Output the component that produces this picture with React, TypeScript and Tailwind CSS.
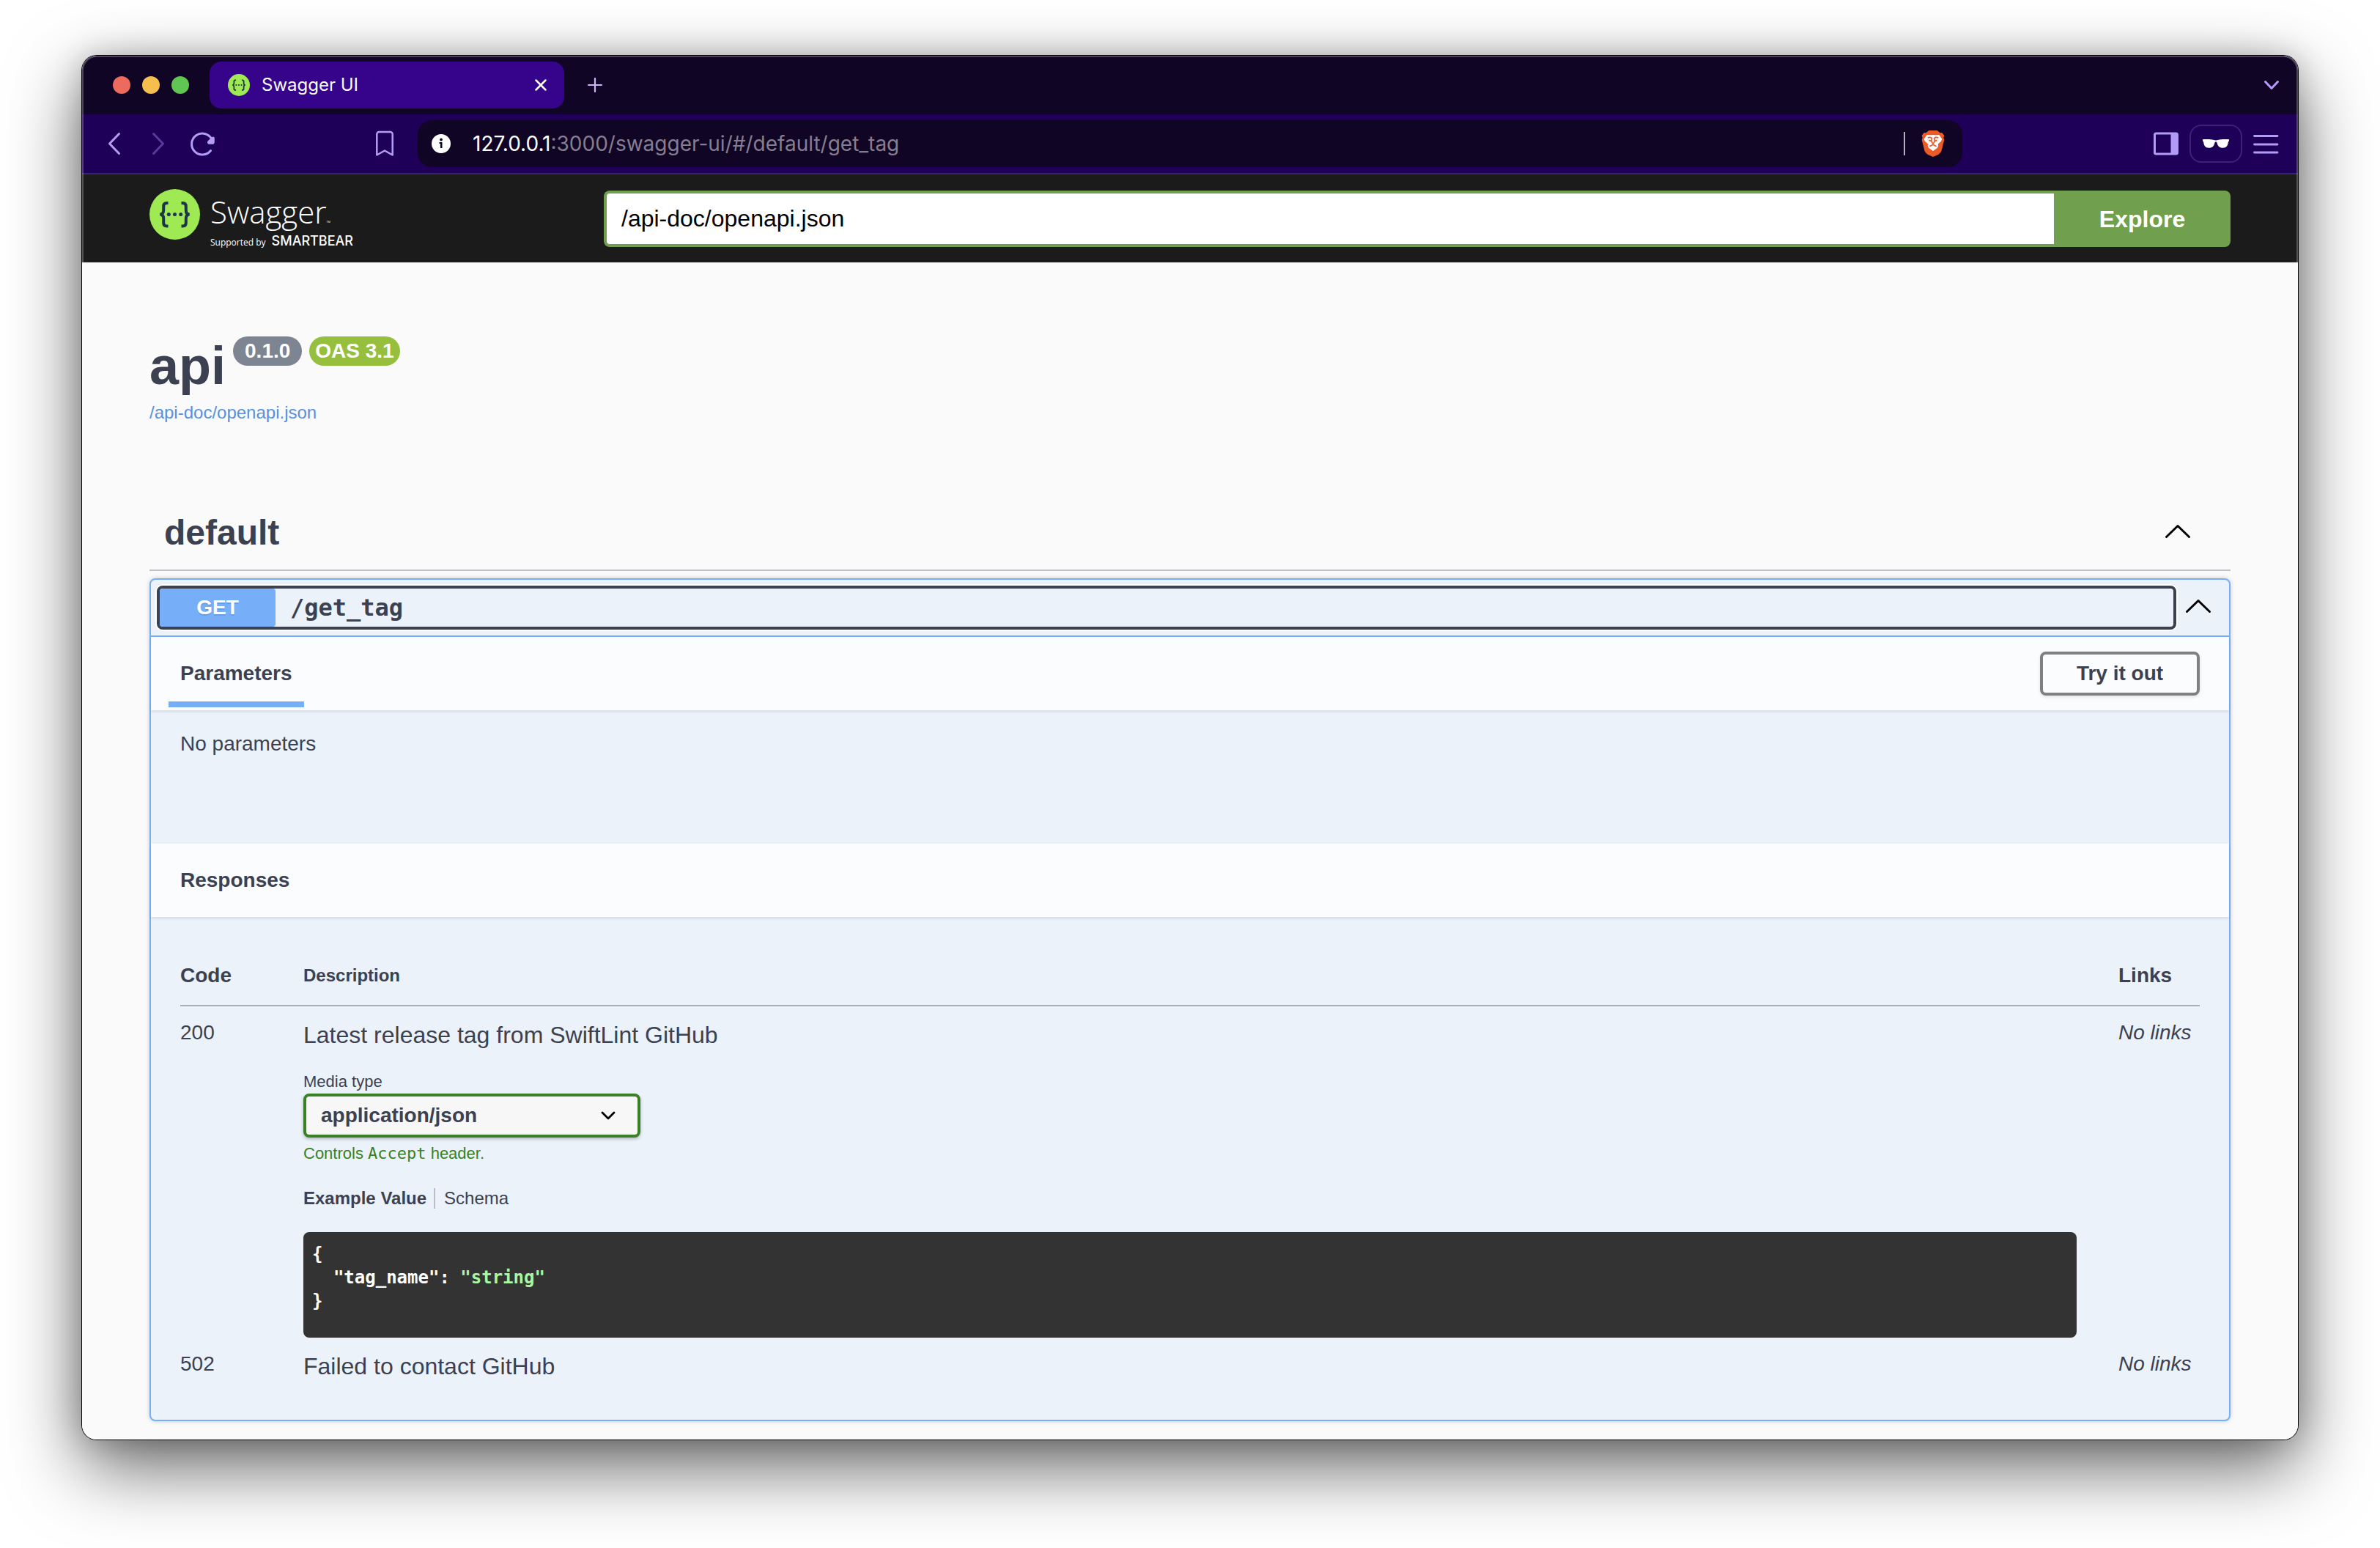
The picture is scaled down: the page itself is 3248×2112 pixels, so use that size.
const MONO = "font-['DejaVu_Sans_Mono',monospace]";

function SwaggerMark({ className }: { className: string }) {
  return (
    <svg className={className} viewBox="0 0 69 69" fill="none" aria-hidden="true">
      <circle cx="34.5" cy="34.5" r="34.5" fill="#9fea53" />
      <path
        d="M25.500 19h-2c-2.800 0-4.300 1.600-4.300 4.500v5.500c0 3.300-1.200 5.500-5 5.500 3.800 0 5 2.300 5 5.500v6c0 2.900 1.500 4.500 4.300 4.500h2M43.500 19h2c2.800 0 4.300 1.600 4.300 4.500v5.500c0 3.300 1.200 5.500 5 5.500-3.800 0-5 2.300-5 5.500v6c0 2.900-1.500 4.500-4.300 4.500h-2"
        stroke="#1d3647"
        strokeWidth="4"
      />
      <circle cx="26.300" cy="34.500" r="2.500" fill="#1d3647" />
      <circle cx="34.500" cy="34.500" r="2.500" fill="#1d3647" />
      <circle cx="42.700" cy="34.500" r="2.500" fill="#1d3647" />
    </svg>
  );
}

function BraveLion() {
  return (
    <svg className="h-9 w-8" viewBox="0 0 94 108" aria-hidden="true">
      <path
        d="M30 0h34l12 10 8-1 9 12-3 9 3 8-11 44c-2 8-8 13-14 17L47 108 26 99c-6-4-12-9-14-17L1 38l3-8-3-9 9-12 8 1Z"
        fill="#eb5b28"
      />
      <path
        d="M22 18c8 1 16 1 25 0 9 1 17 1 25 0l12 17-4 9-13 12 2 7-5 9-17 12-17-12-5-9 2-7-13-12-4-9Z"
        fill="#fff"
      />
      <path
        d="M25 30c6-3 13-2 17 1l-2 9 3 10 4 3 4-3 3-10-2-9c4-3 11-4 17-1M30 40l10 3M64 40l-10 3M33 65l14-7 14 7M47 55v5"
        fill="none"
        stroke="#eb5b28"
        strokeWidth="5"
        strokeLinejoin="round"
      />
      <path d="m35 71 12-6 12 6-12 11Z" fill="#fff" />
    </svg>
  );
}

function ArrowUp() {
  return (
    <svg className="size-10" viewBox="0 0 40 40" fill="none" stroke="#000" strokeWidth="3" strokeLinecap="round" strokeLinejoin="round" aria-hidden="true">
      <path d="M4.500 25.500 20 10.500l15.500 15" />
    </svg>
  );
}

function TabStrip() {
  return (
    <div className="flex h-20 items-center bg-[#110525] pr-6 pl-[42px] font-[Inter,sans-serif]">
      <div className="flex gap-4">
        <button aria-label="Close window" className="size-6 rounded-full bg-[#ec6a5e]" />
        <button aria-label="Minimise window" className="size-6 rounded-full bg-[#f4bf4f]" />
        <button aria-label="Zoom window" className="size-6 rounded-full bg-[#61c554]" />
      </div>
      <div className="ml-7 flex h-16 w-[484px] items-center rounded-2xl bg-[#35048b] pr-6 pl-[25px]">
        <SwaggerMark className="size-[30px]" />
        <span className="ml-4 flex-1 text-2xl text-white">Swagger UI</span>
        <button aria-label="Close tab">
          <svg className="size-4" viewBox="0 0 16 16" stroke="#fff" strokeWidth="2.500" strokeLinecap="round" aria-hidden="true">
            <path d="m1.500 1.500 13 13m0-13-13 13" />
          </svg>
        </button>
      </div>
      <button aria-label="New tab" className="ml-8">
        <svg className="size-5" viewBox="0 0 20 20" stroke="#c5b5f5" strokeWidth="2.200" strokeLinecap="round" aria-hidden="true">
          <path d="M10 1v18M1 10h18" />
        </svg>
      </button>
      <button aria-label="Search tabs" className="ml-auto">
        <svg className="h-4 w-6" viewBox="0 0 24 16" fill="none" stroke="#b39cf8" strokeWidth="3" strokeLinecap="round" strokeLinejoin="round" aria-hidden="true">
          <path d="m3.500 3.500 8.500 9 8.500-9" />
        </svg>
      </button>
    </div>
  );
}

function Toolbar() {
  return (
    <div className="flex items-center border-b-2 border-[#3c217a] bg-[#1e0058] py-2 pr-[26px] pl-8 font-[Inter,sans-serif]">
      <button aria-label="Back">
        <svg className="h-9 w-6" viewBox="0 0 24 36" fill="none" stroke="#b39cf8" strokeWidth="3" strokeLinecap="round" strokeLinejoin="round" aria-hidden="true">
          <path d="M18.500 4.500 5.500 18l13 13.500" />
        </svg>
      </button>
      <button aria-label="Forward" className="ml-9">
        <svg className="h-9 w-6" viewBox="0 0 24 36" fill="none" stroke="#5a3a9c" strokeWidth="3" strokeLinecap="round" strokeLinejoin="round" aria-hidden="true">
          <path d="m5.500 4.500 13 13.500-13 13.500" />
        </svg>
      </button>
      <button aria-label="Reload" className="ml-[30px]">
        <svg className="size-9" viewBox="0 0 36 36" fill="none" aria-hidden="true">
          <path d="M29.500 27.500A14.500 14.500 0 1 1 31 12" stroke="#b39cf8" strokeWidth="3" strokeLinecap="round" />
          <path d="M34.800 10.600v4.800a3.400 3.400 0 0 1-3.400 3.400h-3.600c-2.600 0-3.700-3-1.900-4.900l5.200-4.600c1.700-1.600 3.700-.6 3.700 1.300Z" fill="#b39cf8" />
        </svg>
      </button>
      <button aria-label="Bookmark this page" className="ml-[218px]">
        <svg className="h-9 w-[26px]" viewBox="0 0 26 36" fill="none" stroke="#b39cf8" strokeWidth="2.500" strokeLinejoin="round" aria-hidden="true">
          <path d="M2.300 5a3 3 0 0 1 3-3h15.400a3 3 0 0 1 3 3v28.500L13 27.500 2.300 33.500Z" />
        </svg>
      </button>
      <div className="ml-8 flex h-16 w-[2108px] items-center rounded-[20px] bg-[#110525] pr-6 pl-[19px]">
        <svg className="size-[26px]" viewBox="0 0 26 26" aria-hidden="true">
          <circle cx="13" cy="13" r="13" fill="#fff" />
          <circle cx="13" cy="7.500" r="1.900" fill="#110525" />
          <path d="M10.500 11h4v8h-2.600v-6h-1.400z" fill="#110525" />
        </svg>
        <div className="ml-[30px] flex-1 text-[28px] text-[#857e91]">
          <span className="text-white">127.0.0.1</span>:3000/swagger-ui/#/default/get_tag
        </div>
        <div className="h-8 w-0.5 bg-[#b4b0bb]" />
        <button aria-label="Brave Shields" className="ml-[22px]">
          <BraveLion />
        </button>
      </div>
      <button aria-label="Show sidebar" className="ml-auto">
        <svg className="h-8 w-9" viewBox="0 0 36 32" aria-hidden="true">
          <rect x="2.500" y="2" width="31" height="28" rx="2" fill="none" stroke="#b39cf8" strokeWidth="3" />
          <path d="M24.500 2h9v28h-9z" fill="#b39cf8" />
        </svg>
      </button>
      <button aria-label="Private profile" className="ml-3.5 flex h-[52px] w-[72px] items-center justify-center rounded-2xl border-2 border-[#3c217a]">
        <svg className="h-3 w-9" viewBox="0 0 36 12" fill="#fff" aria-hidden="true">
          <path d="M0 .3c5-.5 11-.4 15.300.8 1.700.5 3.700.5 5.400 0C25-.1 31-.2 36 .3v2.200c-.8.200-1 .8-1.200 1.800C34 9 32.500 11.800 27.500 11.800c-4.700 0-7-2.400-8-7.300-.3-1.500-2.700-1.500-3 0-1 4.900-3.300 7.300-8 7.300-5 0-6.500-2.800-7.300-7.500C1 3.300.8 2.700 0 2.500Z" />
        </svg>
      </button>
      <button aria-label="Menu" className="ml-3.5">
        <svg className="h-8 w-9" viewBox="0 0 36 32" stroke="#b39cf8" strokeWidth="2.800" strokeLinecap="round" aria-hidden="true">
          <path d="M2.500 5.500h31.500M2.500 17h31.500M2.500 28h31.500" />
        </svg>
      </button>
    </div>
  );
}

function Topbar() {
  return (
    <header className="flex h-[120px] items-start bg-[#1b1b1b] px-[92px] pt-5">
      <a href="#" aria-label="Swagger" className="flex w-[620px] items-start gap-3.5 font-['Open_Sans',sans-serif] text-white">
        <SwaggerMark className="size-[69px]" />
        <span className="flex flex-col">
          <span className="flex items-end text-[42px] leading-[62px] font-[350]">
            Swagger<span className="text-[8px] leading-8">™</span>
          </span>
          <span className="flex items-baseline gap-2 text-xs leading-[18px]">
            Supported by <span className="font-[Inter,sans-serif] text-lg leading-[18px] font-medium">SMARTBEAR</span>
          </span>
        </span>
      </a>
      <form className="mt-0.5 flex flex-1" onSubmit={(e) => e.preventDefault()}>
        <input
          aria-label="Definition URL"
          defaultValue="/api-doc/openapi.json"
          className="h-[77px] min-w-0 flex-1 rounded-l-lg border-4 border-r-0 border-[#709f4e] bg-white px-5 text-[32px] text-black outline-none"
        />
        <button className="w-[241px] rounded-r-lg bg-[#709f4e] text-[32px] font-bold text-white">Explore</button>
      </form>
    </header>
  );
}

function ResponsesTable() {
  return (
    <table className="w-full text-left text-[28px] leading-10">
      <thead>
        <tr className="border-b-2 border-[#a8b0bc] align-top">
          <th className="w-[168px] py-5">Code</th>
          <th className="py-5 text-2xl leading-10">Description</th>
          <th className="w-[111px] py-5">Links</th>
        </tr>
      </thead>
      <tbody className="align-top">
        <tr>
          <td className="pt-4">200</td>
          <td className="pt-4 pr-[57px]">
            <p className="text-[32px] leading-[46px]">Latest release tag from SwiftLint GitHub</p>
            <label htmlFor="media-type" className="mt-6 block text-[22px] leading-[33px]">
              Media type
            </label>
            <div className="relative w-[460px]">
              <select
                id="media-type"
                className="block h-[60px] w-full appearance-none rounded-lg border-4 border-[#398124] bg-[#f7f7f7] px-5 text-[28px] font-bold shadow-[0_2px_4px_rgba(0,0,0,0.25)]"
              >
                <option>application/json</option>
              </select>
              <svg className="pointer-events-none absolute top-5 right-[34px] size-5" viewBox="0 0 20 20" fill="none" stroke="#000" strokeWidth="2.800" strokeLinecap="round" strokeLinejoin="round" aria-hidden="true">
                <path d="m2 6 8 8 8-8" />
              </svg>
            </div>
            <p className="mt-1.5 h-8 text-[22px] leading-8 text-[#398124]">
              Controls <code className={MONO}>Accept</code> header.
            </p>
            <div className="mt-[31px] flex text-2xl leading-7">
              <button className="border-r-2 border-[#b9bec9] pr-2.5 font-bold">Example Value</button>
              <button className="pl-3">Schema</button>
            </div>
            <pre className="mt-8 rounded-lg bg-[#333] px-3 pt-3.5 pb-[34px] text-white">
              <code className="block font-['DejaVu_Sans_Mono',monospace] text-2xl leading-8 font-bold">
                {'{\n  "tag_name": '}
                <span className="text-[#a9f7a0]">"string"</span>
                {"\n}"}
              </code>
            </pre>
          </td>
          <td className="pt-4 italic">No links</td>
        </tr>
        <tr>
          <td className="pt-4">502</td>
          <td className="pt-4 text-[32px] leading-[46px]">Failed to contact GitHub</td>
          <td className="pt-4 italic">No links</td>
        </tr>
      </tbody>
    </table>
  );
}

function Operation() {
  return (
    <div className="mt-2.5 rounded-lg border-2 border-[#76aef8] bg-[#ebf2fa] shadow-[0_0_6px_rgba(0,0,0,0.19)]">
      <div className="flex items-center border-b-2 border-[#76aef8] py-2 pr-[22px] pl-2">
        <button className="flex flex-1 items-center rounded-lg border-4 border-[#3b4151] text-left shadow-[0_0_0_2px_#fff]">
          <span className="w-[158px] rounded-sm bg-[#76aef8] text-center text-[28px] leading-[52px] font-bold text-white [text-shadow:0_2px_0_rgba(0,0,0,0.1)]">
            GET
          </span>
          <span className={`pl-5 text-[32px] leading-10 font-bold ${MONO}`}>/get_tag</span>
        </button>
        <button aria-label="Collapse operation" className="ml-2.5">
          <ArrowUp />
        </button>
      </div>

      <div className="relative flex items-center justify-between bg-[#fbfcfe] px-6 shadow-[0_2px_4px_rgba(0,0,0,0.1)]">
        <h4 className="mb-1 flex items-center self-stretch border-b-8 border-[#76aef8] px-4 pt-3 text-[28px] font-bold">Parameters</h4>
        <button className="my-5 mr-4 h-[60px] w-[218px] rounded-lg border-4 border-[#808080] text-[28px] font-bold shadow-[0_2px_4px_rgba(0,0,0,0.1)]">
          Try it out
        </button>
      </div>
      <p className="px-10 pt-[26px] pb-[116px] text-[28px] leading-10">No parameters</p>

      <div className="bg-[#fbfcfe] px-10 py-[30px] shadow-[0_2px_4px_rgba(0,0,0,0.1)]">
        <h4 className="text-[28px] leading-10 font-bold">Responses</h4>
      </div>
      <div className="px-10 pt-10 pb-[50px]">
        <ResponsesTable />
      </div>
    </div>
  );
}

export default function App() {
  return (
    <div className="min-h-screen bg-white px-28 pt-[76px] pb-[148px] font-['Liberation_Sans',Arial,sans-serif] text-[#3b4151]">
      <div className="relative rounded-[20px] shadow-[0_0_0_1px_#000,0_36px_100px_rgba(0,0,0,0.62),0_0_40px_rgba(0,0,0,0.2)]">
        <div className="overflow-hidden rounded-[20px] bg-[#fafafa]">
          <TabStrip />
          <Toolbar />
          <Topbar />
          <main className="px-[92px] pt-[101px] pb-[25px]">
            <div className="flex items-start">
              <h1 className="mt-1 text-[72px] leading-[72px] font-bold">api</h1>
              <span className="ml-2.5 rounded-full bg-[#7d8492] px-4 text-[28px] leading-10 font-bold text-white">0.1.0</span>
              <span className="ml-2.5 rounded-full bg-[#95bf3d] px-2 text-[28px] leading-10 font-bold text-white">OAS 3.1</span>
            </div>
            <a href="#" className="mt-3 block w-fit text-2xl leading-8 text-[#5990de]">
              /api-doc/openapi.json
            </a>
            <section className="mt-[100px]">
              <div className="flex items-center justify-between border-b-2 border-[#c0c1c8] pt-4 pr-[52px] pb-[18px] pl-5">
                <h2 className="text-5xl leading-[64px] font-bold">default</h2>
                <button aria-label="Collapse section">
                  <ArrowUp />
                </button>
              </div>
              <Operation />
            </section>
          </main>
        </div>
        <div className="pointer-events-none absolute inset-0 rounded-[20px] border-2 border-white/25" />
      </div>
    </div>
  );
}
